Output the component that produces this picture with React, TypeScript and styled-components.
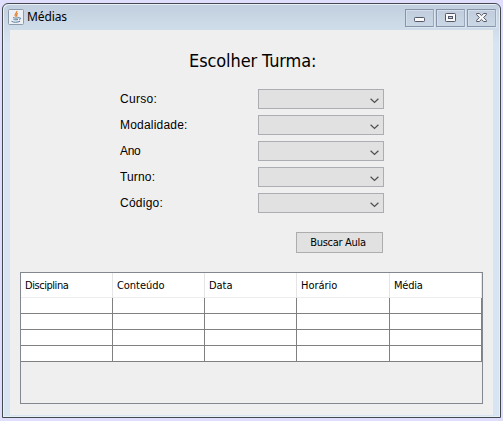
import React from "react";
import styled, { createGlobalStyle } from "styled-components";

const Global = createGlobalStyle`
  * { box-sizing: border-box; }
  html, body { margin: 0; height: 421px; overflow: hidden; background: #dfdffd; }
`;

const tahoma = `"DejaVu Sans Condensed", "DejaVu Sans", sans-serif`;

const Desktop = styled.div`
  width: 503px;
  height: 421px;
  padding: 3px 0 0 2px;
  color: #000;
`;

const Window = styled.div`
  width: 499px;
  height: 415px;
  border: 1px solid #45484d;
  border-radius: 6px 6px 0 0;
  background: linear-gradient(#c0cedd 0, #c9d6e4 14px, #d7e4f1 40px);
  box-shadow: inset 1px 1px 0 #e8f1fa, inset -1px -1px 0 #e2f1f5;
  padding: 0 7px;
  display: flex;
  flex-direction: column;
`;

const TitleBar = styled.header`
  height: 26px;
  flex: none;
  display: flex;
  justify-content: space-between;
`;

const TitleGroup = styled.div`
  display: flex;
  align-items: flex-start;
  margin-left: -2px;
  padding-top: 5px;
  gap: 3px;
`;

const TitleText = styled.span`
  font: 12px/16px "Noto Sans", sans-serif;
  letter-spacing: -0.12px;
`;

const Controls = styled.div`
  display: flex;
  gap: 2px;
  padding-top: 5px;
  margin-right: -3px;
`;

const ControlButton = styled.button`
  width: 29px;
  height: 18px;
  padding: 0 0 1px;
  border: 1px solid #8793a9;
  border-right-color: #9da9bb;
  border-radius: 1px;
  background: linear-gradient(#c1cddc, #cad7e5);
  box-shadow: inset 1px 1px 0 #d3deea, 1px 1px 0 #dce6f0;
  display: flex;
  align-items: center;
  justify-content: center;
`;

const Content = styled.main`
  width: 483px;
  height: 385px;
  background: #efefef;
  padding: 20px 10px 0;
`;

const Heading = styled.h1`
  margin: 0 0 0 169px;
  height: 39px;
  font: 400 18px/22px ${tahoma};
  letter-spacing: -0.1px;
  white-space: nowrap;
`;

const Form = styled.div`
  display: grid;
  grid-template-columns: 138px 126px;
  grid-auto-rows: 20px;
  row-gap: 6px;
  margin-left: 100px;
`;

const Label = styled.label<{ $spacing: number }>`
  font: 12px/20px "Liberation Sans", Arial, sans-serif;
  letter-spacing: ${(p) => p.$spacing}px;
`;

const Combo = styled.div`
  border: 1px solid #acacb3;
  background: #e1e1e1;
  display: flex;
  align-items: center;
  justify-content: flex-end;
  padding: 4px 4px 0 0;
`;

const SearchButton = styled.button`
  display: block;
  width: 87px;
  height: 21px;
  margin: 19px 0 0 276px;
  padding: 0 3px 1px 0;
  border: 1px solid #adadad;
  background: #e1e1e1;
  color: #000;
  font: 11px/17px ${tahoma};
  letter-spacing: -0.28px;
  white-space: nowrap;
`;

const ScrollPane = styled.div`
  width: 463px;
  height: 132px;
  margin-top: 19px;
  border: 1px solid #828790;
`;

const Columns = styled.div`
  display: grid;
  grid-template-columns: 92px 92px 92px 93px 92px;
`;

const HeaderRow = styled(Columns)`
  height: 25px;
  background: #fff;
  border-bottom: 1px solid #ededed;
`;

const HeaderCell = styled.div<{ $spacing: number }>`
  padding-left: 4px;
  border-right: 1px solid #e5e5e5;
  font: 11px/26px ${tahoma};
  letter-spacing: ${(p) => p.$spacing}px;
`;

const BodyRow = styled(Columns)`
  height: 16px;
`;

const Cell = styled.div`
  background: #fff;
  border-right: 1px solid #808080;
  border-bottom: 1px solid #808080;
`;

const JavaIcon = () => (
  <svg width="16" height="16" viewBox="0 0 16 16" fill="none">
    <rect x=".5" y=".5" width="15" height="15" rx="1" fill="#edf1f5" stroke="#8c9baa" />
    <path d="M8.8 2C9.4 4 5.5 4.6 7.5 7.7M9.8 4.3C8 5.3 8.2 6 9 7.8" stroke="#e5812e" strokeWidth="1.2" />
    <path d="M5 8.6c1.6.7 4.3.6 6 0M5.5 10.4c1.5.6 3.3.5 4.5.1M3.5 12.3c2.2 1.4 6.2 1.1 8.5 0M11 9c2-.7 2.4 1 0 2" stroke="#587b9c" />
  </svg>
);

const Chevron = () => (
  <svg width="9" height="6" viewBox="0 0 9 6" fill="none">
    <path d="M.6 .8 4.5 4.5 8.4 .8" stroke="#505050" strokeWidth="1.25" />
  </svg>
);

const MinimizeIcon = () => (
  <svg width="11" height="13" viewBox="0 0 11 13">
    <rect x=".5" y="6.5" width="10" height="4" rx=".8" fill="#fafafa" stroke="#535766" />
  </svg>
);

const MaximizeIcon = () => (
  <svg width="11" height="9" viewBox="0 0 11 9">
    <rect x=".5" y=".5" width="10" height="8" rx=".8" fill="#fafafa" stroke="#535766" />
    <rect x="3.5" y="3.5" width="4" height="2" fill="#c3cfde" stroke="#535766" />
  </svg>
);

const CloseIcon = () => (
  <svg width="11" height="9" viewBox="0 0 11 9">
    <path
      d="M.6.5h2.7L5.5 2.6 7.7.5h2.7v1.2L7.6 4.5l2.8 2.8v1.2H7.7L5.5 6.4 3.3 8.5H.6V7.3l2.8-2.8L.6 1.7z"
      fill="#fafafa"
      stroke="#535766"
    />
  </svg>
);

const fields = [
  { label: "Curso:", spacing: 0.3 },
  { label: "Modalidade:", spacing: 0.2 },
  { label: "Ano", spacing: -0.3 },
  { label: "Turno:", spacing: 0.15 },
  { label: "Código:", spacing: 0.25 },
];

const headers = [
  { label: "Disciplina", spacing: -0.45 },
  { label: "Conteúdo", spacing: -0.05 },
  { label: "Data", spacing: -0.05 },
  { label: "Horário", spacing: -0.05 },
  { label: "Média", spacing: -0.2 },
];

export default function App() {
  return (
    <Desktop>
      <Global />
      <Window>
        <TitleBar>
          <TitleGroup>
            <JavaIcon />
            <TitleText>Médias</TitleText>
          </TitleGroup>
          <Controls>
            <ControlButton aria-label="Minimizar"><MinimizeIcon /></ControlButton>
            <ControlButton aria-label="Maximizar"><MaximizeIcon /></ControlButton>
            <ControlButton aria-label="Fechar"><CloseIcon /></ControlButton>
          </Controls>
        </TitleBar>
        <Content>
          <Heading>Escolher Turma:</Heading>
          <Form>
            {fields.map((f) => (
              <React.Fragment key={f.label}>
                <Label $spacing={f.spacing}>{f.label}</Label>
                <Combo><Chevron /></Combo>
              </React.Fragment>
            ))}
          </Form>
          <SearchButton>Buscar Aula</SearchButton>
          <ScrollPane>
            <HeaderRow>
              {headers.map((h) => (
                <HeaderCell key={h.label} $spacing={h.spacing}>{h.label}</HeaderCell>
              ))}
            </HeaderRow>
            {[0, 1, 2, 3].map((row) => (
              <BodyRow key={row}>
                {headers.map((h) => <Cell key={h.label} />)}
              </BodyRow>
            ))}
          </ScrollPane>
        </Content>
      </Window>
    </Desktop>
  );
}
